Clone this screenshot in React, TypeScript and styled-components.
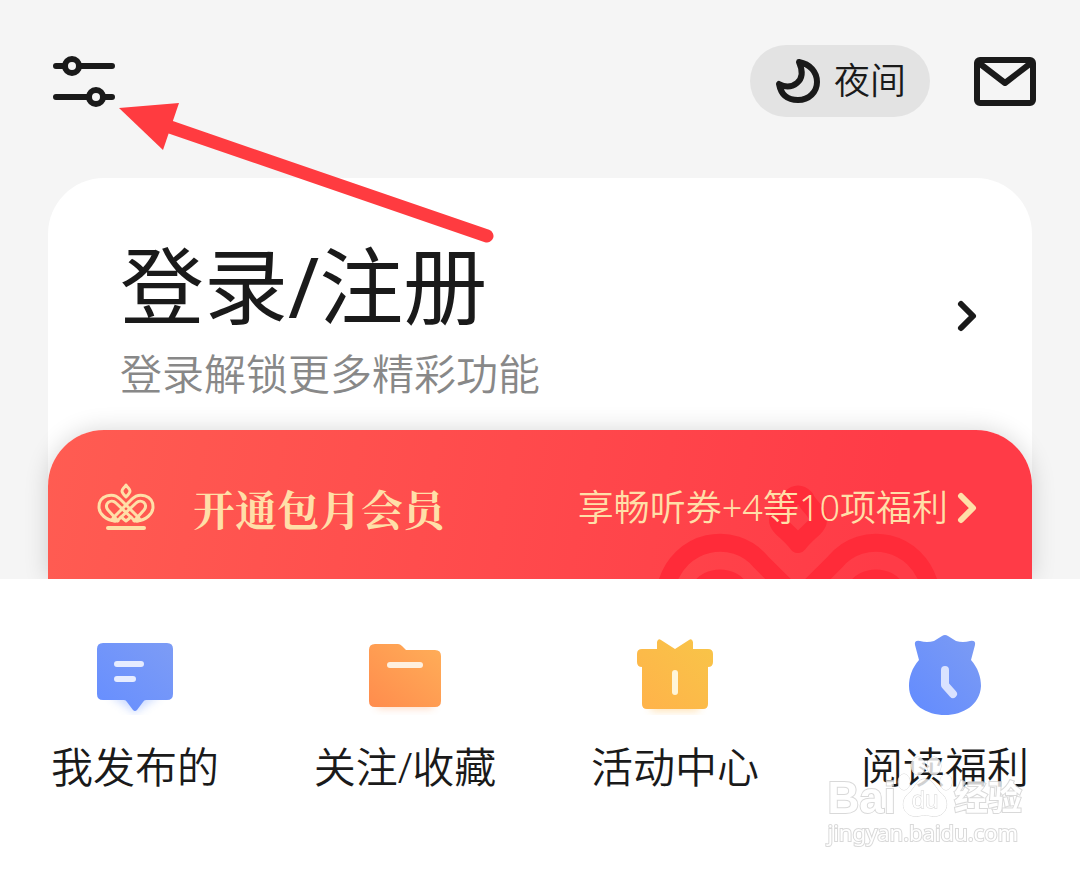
import React from 'react';
import styled, { createGlobalStyle } from 'styled-components';

const sans = '"Noto Sans", "Noto Sans CJK SC", sans-serif';
const serif = '"Noto Serif CJK SC", "Source Han Serif SC", "Noto Sans CJK SC", serif';

const GlobalStyle = createGlobalStyle`
  *, *::before, *::after { box-sizing: border-box; }
  body { margin: 0; background: #fff; color: #1a1a1a; font-family: ${sans}; }
  button { border: 0; padding: 0; background: none; color: inherit; font: inherit; cursor: pointer; }
  a { color: inherit; text-decoration: none; }
  h1, p { margin: 0; font-weight: 400; }
  svg { display: block; flex: none; }
`;

const Page = styled.div`
  position: relative;
  min-height: 100vh;
  overflow: hidden;
`;

const Profile = styled.div`
  background: #f5f5f5;
  overflow: hidden;
`;

const TopBar = styled.header`
  display: flex;
  align-items: center;
  gap: 40px;
  height: 178px;
  padding: 0 40px 16px 48px;
`;

const IconButton = styled.button`
  display: flex;
`;

const NightButton = styled.button`
  && {
    display: flex;
    align-items: center;
    gap: 10px;
    height: 72px;
    margin-left: auto;
    padding: 0 24px;
    border-radius: 36px;
    background: #e3e3e3;
    font-size: 36px;
    font-weight: 350;
    line-height: 72px;
  }
`;

const AccountCard = styled.main`
  margin: 0 48px;
  border-radius: 56px 56px 0 0;
  background: #fff;
`;

const LoginLink = styled.a`
  display: flex;
  align-items: center;
  justify-content: space-between;
  height: 252px;
  padding: 24px 52px 0 72px;
`;

const LoginText = styled.div`
  padding-top: 6px;
`;

const LoginTitle = styled.h1`
  font-size: 84px;
  line-height: 104px;
`;

const LoginHint = styled.p`
  && {
    margin-top: 6px;
    color: #888;
    font-size: 42px;
    font-weight: 350;
    line-height: 60px;
  }
`;

const MemberLink = styled.a`
  && {
    position: relative;
    display: flex;
    align-items: center;
    height: 149px;
    padding: 6px 52px 0 48px;
    border-radius: 56px 56px 0 0;
    background: linear-gradient(100deg, #ff5c52 0%, #ff3b47 85%);
    box-shadow: 0 0 24px rgba(0, 0, 0, 0.16);
    color: #ffdfa8;
  }
`;

const MemberTitle = styled.span`
  flex: 1;
  margin-left: 37px;
  font-family: ${serif};
  font-size: 42px;
  font-weight: 700;
  line-height: 60px;
`;

const MemberOffer = styled.span`
  position: relative;
  margin-right: 8px;
  font-size: 36px;
  font-weight: 350;
  line-height: 52px;
`;

const CrownBackdrop = styled.svg`
  position: absolute;
  right: 88px;
  bottom: 0;
`;

const Shortcuts = styled.nav`
  display: grid;
  grid-template-columns: repeat(4, 1fr);
  padding: 46px 0;
`;

const Shortcut = styled.a`
  display: flex;
  flex-direction: column;
  align-items: center;
  gap: 22px;
  font-size: 42px;
  font-weight: 350;
  line-height: 60px;
`;

const Arrow = styled.svg`
  position: absolute;
  top: 90px;
  left: 110px;
  pointer-events: none;
`;

const Watermark = styled.div`
  position: absolute;
  right: 58px;
  bottom: 24px;
  display: flex;
  flex-direction: column;
  color: #fff;
  font-family: "Liberation Sans", ${sans};
  -webkit-text-stroke: 2px #d0d0d0;
  paint-order: stroke fill;
  opacity: 0.8;
  pointer-events: none;
`;

const WatermarkBrand = styled.div`
  display: flex;
  align-items: flex-end;
  font-size: 44px;
  font-weight: 700;
  line-height: 40px;
`;

const WatermarkName = styled.span`
  font-size: 34px;
`;

const WatermarkSite = styled.div`
  font-family: "Noto Sans", sans-serif;
  font-size: 22px;
  line-height: 28px;
`;

const SettingsIcon = () => (
  <svg width="72" height="60" viewBox="0 0 72 60" fill="none" stroke="#1a1a1a" strokeWidth="6" strokeLinecap="round">
    <path d="M8 15h8M32 15h32M8 46h32M56 46h8" />
    <circle cx="24" cy="15" r="7" />
    <circle cx="48" cy="46" r="7" />
  </svg>
);

const MoonIcon = () => (
  <svg width="50" height="50" viewBox="0 0 50 50" fill="none" stroke="#1a1a1a" strokeWidth="6" strokeLinecap="round" strokeLinejoin="round">
    <path d="M25 6c4 9 4 16-2 21-5 4-11 5-18 1C7 39 14 44 24 44c11 0 19-8 19-18C43 16 36 8 25 6Z" />
  </svg>
);

const MailIcon = () => (
  <svg width="70" height="60" viewBox="0 0 70 60" fill="none" stroke="#1a1a1a" strokeWidth="6" strokeLinejoin="round">
    <rect x="7" y="9" width="56" height="43" rx="3" />
    <path d="M9 12l26 20 26-20" />
  </svg>
);

const Chevron = () => (
  <svg width="24" height="36" viewBox="0 0 24 36" fill="none" stroke="currentColor" strokeWidth="6" strokeLinecap="round" strokeLinejoin="round">
    <path d="M5 6l12 12L5 30" />
  </svg>
);

const CrownIcon = () => (
  <svg width="60" height="50" viewBox="0 0 60 50" fill="none" stroke="currentColor" strokeWidth="3" strokeLinecap="round" strokeLinejoin="round">
    <path d="M30 2c2 3 4 4 4 6s-2 4-4 6c-2-2-4-4-4-6s2-3 4-6Z" />
    <path d="M19 38C10 37 3 31 3 24 3 12 17 9 24 16l18 18q4 4 -1 4H39L20 20c-5-5-13 1-8 7l10 11" />
    <path d="M41 38c9-1 16-7 16-14 0-12-14-15-21-8L18 34q-4 4 1 4h2L40 20c5-5 13 1 8 7L38 38" />
    <path d="M25 34l5 4 5-4" />
    <path d="M12 45h36" strokeWidth="4" />
  </svg>
);

const PostsIcon = () => (
  <svg width="84" height="90" viewBox="0 0 84 90">
    <defs>
      <linearGradient id="posts" x1="0" y1="1" x2="1" y2="0">
        <stop offset="0" stopColor="#668eff" />
        <stop offset="1" stopColor="#7d9cf5" />
      </linearGradient>
      <filter id="soft" x="-20%" y="-60%" width="140%" height="220%"><feGaussianBlur stdDeviation="4" /></filter>
    </defs>
    <path d="M14 68h56L42 88Z" fill="#8fb0ff" opacity=".45" filter="url(#soft)" />
    <path d="M10 18h64q6 0 6 6v45q0 6-6 6H53q-2 0-3 2l-6 8q-2 2-4 0l-6-8q-1-2-3-2H10q-6 0-6-6V24q0-6 6-6Z" fill="url(#posts)" />
    <path d="M24 39h24M24 54h16" stroke="#e6ecff" strokeWidth="6" strokeLinecap="round" />
  </svg>
);

const FolderIcon = () => (
  <svg width="84" height="90" viewBox="0 0 84 90">
    <defs>
      <linearGradient id="folder" x1="0" y1="1" x2="1" y2="0">
        <stop offset="0" stopColor="#ff8c4d" />
        <stop offset="1" stopColor="#ffae58" />
      </linearGradient>
    </defs>
    <path d="M14 70h56v13H14Z" fill="#ff9a5c" opacity=".4" filter="url(#soft)" />
    <path d="M12 19h23q2 0 4 2l4 4h29q6 0 6 6v45q0 6-6 6H12q-6 0-6-6V25q0-6 6-6Z" fill="url(#folder)" />
    <path d="M27 40h30" stroke="#fff0df" strokeWidth="6" strokeLinecap="round" />
  </svg>
);

const GiftIcon = () => (
  <svg width="84" height="90" viewBox="0 0 84 90">
    <defs>
      <linearGradient id="gift" x1="0" y1="1" x2="1" y2="0">
        <stop offset="0" stopColor="#ffb24a" />
        <stop offset="1" stopColor="#f8c548" />
      </linearGradient>
    </defs>
    <path d="M18 74h48v12H18Z" fill="#ffbd55" opacity=".45" filter="url(#soft)" />
    <path d="M9 24h15v-7q1-4 4-2l14 9 14-9q3-2 4 2v7h15q5 0 5 5v8q0 5-5 5v37q0 5-5 5H14q-5 0-5-5V42q-5 0-5-5v-8q0-5 5-5Z" fill="url(#gift)" />
    <path d="M42 48v19" stroke="#fff5d8" strokeWidth="6" strokeLinecap="round" />
  </svg>
);

const BenefitIcon = () => (
  <svg width="84" height="90" viewBox="0 0 84 90">
    <defs>
      <linearGradient id="benefit" x1="0" y1="1" x2="1" y2="0">
        <stop offset="0" stopColor="#628bff" />
        <stop offset="1" stopColor="#7d9cf3" />
      </linearGradient>
    </defs>
    <path d="M17 16q7 2 14 0l8-5q3-2 6 0l8 5q7 2 14 0 6-1 5 4l-4 15C75 43 78 52 78 61 77 80 60 90 42 90S6 80 6 61C6 52 9 43 16 35l-4-15q-1-5 5-4Z" fill="url(#benefit)" />
    <path d="M42 45v15l8 9" fill="none" stroke="#d9e2ff" strokeWidth="8" strokeLinecap="round" strokeLinejoin="round" />
  </svg>
);

const PawMark = () => (
  <svg width="58" height="62" viewBox="0 0 58 62" fill="#fff" stroke="#c8c8c8">
    <ellipse cx="8" cy="26" rx="6" ry="8" />
    <ellipse cx="22" cy="10" rx="7" ry="9" />
    <ellipse cx="38" cy="10" rx="7" ry="9" />
    <ellipse cx="50" cy="26" rx="6" ry="8" />
    <path d="M29 23c8 0 10 9 16 14 9 7 7 21-4 23-6 1-8-1-12-1s-6 2-12 1C6 58 4 44 13 37c6-5 8-14 16-14Z" />
    <text x="29" y="52" fontSize="24" fontWeight="400" textAnchor="middle">du</text>
  </svg>
);

const shortcuts = [
  { label: '我发布的', Icon: PostsIcon },
  { label: '关注/收藏', Icon: FolderIcon },
  { label: '活动中心', Icon: GiftIcon },
  { label: '阅读福利', Icon: BenefitIcon },
];

export default function App() {
  return (
    <>
      <GlobalStyle />
      <Page>
        <Profile>
          <TopBar>
            <IconButton aria-label="设置"><SettingsIcon /></IconButton>
            <NightButton><MoonIcon />夜间</NightButton>
            <IconButton aria-label="消息"><MailIcon /></IconButton>
          </TopBar>
          <AccountCard>
            <LoginLink href="#login">
              <LoginText>
                <LoginTitle>登录/注册</LoginTitle>
                <LoginHint>登录解锁更多精彩功能</LoginHint>
              </LoginText>
              <Chevron />
            </LoginLink>
            <MemberLink href="#member">
              <CrownBackdrop width="290" height="96" viewBox="0 0 290 96" fill="none" stroke="#ff2b39" strokeWidth="18">
                <path d="M137 15q7-7 14 0c3 8 13 13 13 22 0 7-10 11-20 24-10-13-20-17-20-24 0-9 10-14 13-22Z" strokeLinejoin="round" />
                <path d="M12 104C24 56 80 46 107 79l25 25M276 104C264 56 208 46 181 79l-25 25" />
                <path d="M46 106c8-14 32-14 40 0M202 106c8-14 32-14 40 0" />
              </CrownBackdrop>
              <CrownIcon />
              <MemberTitle>开通包月会员</MemberTitle>
              <MemberOffer>享畅听券+4等10项福利</MemberOffer>
              <Chevron />
            </MemberLink>
          </AccountCard>
        </Profile>
        <Shortcuts>
          {shortcuts.map(({ label, Icon }) => (
            <Shortcut key={label} href="#shortcut"><Icon />{label}</Shortcut>
          ))}
        </Shortcuts>
        <Arrow width="390" height="160" viewBox="0 0 390 160" aria-hidden="true">
          <path d="M60 37l317 109" stroke="#ff3b40" strokeWidth="13" strokeLinecap="round" />
          <path d="M9 18l60-5-16 47Z" fill="#ff3b40" />
        </Arrow>
        <Watermark>
          <WatermarkBrand>Bai<PawMark /><WatermarkName>经验</WatermarkName></WatermarkBrand>
          <WatermarkSite>jingyan.baidu.com</WatermarkSite>
        </Watermark>
      </Page>
    </>
  );
}
